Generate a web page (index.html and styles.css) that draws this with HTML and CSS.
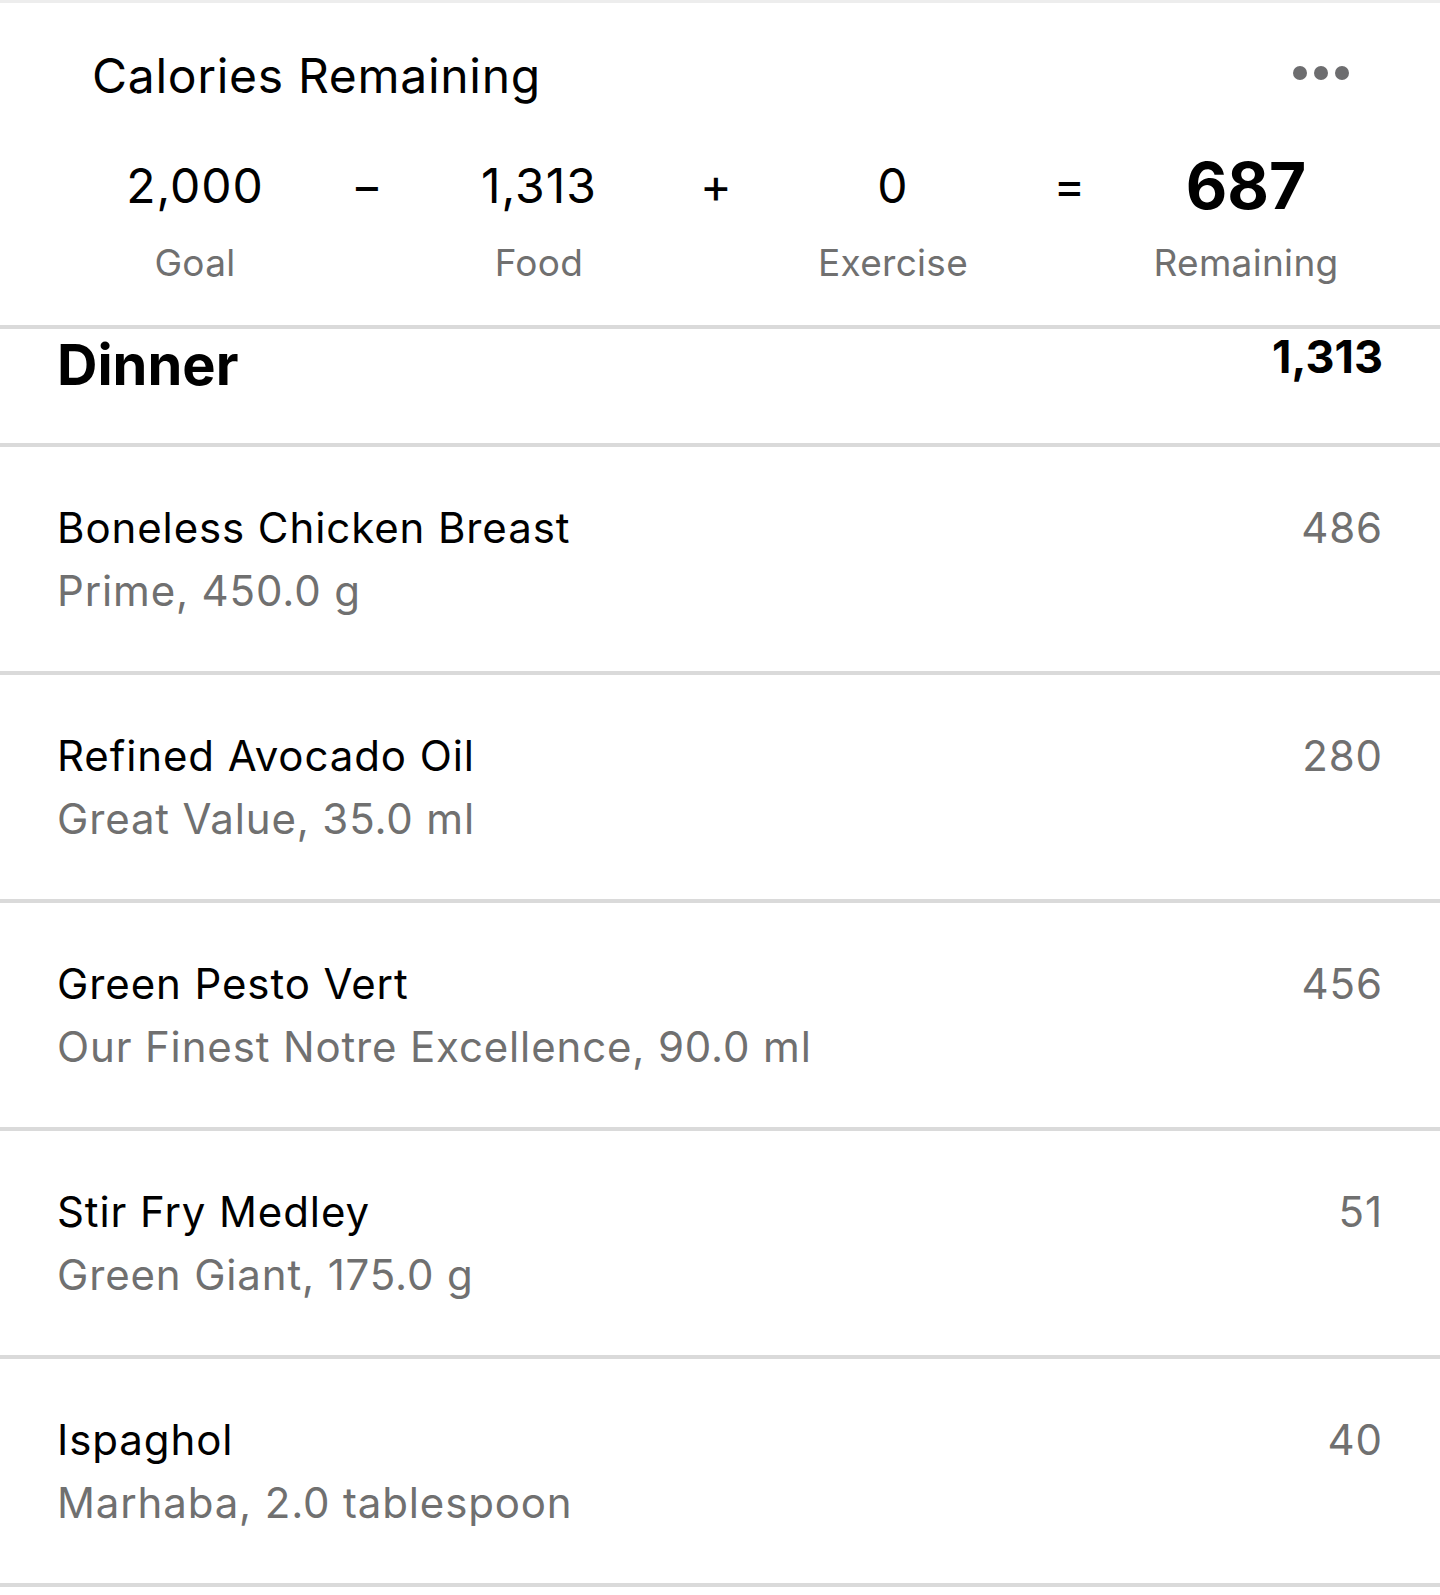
FILE: index.html
```html
<!DOCTYPE html>
<html lang="en">

<head>
    <meta charset="UTF-8">
    <meta name="viewport" content="width=device-width, initial-scale=1.0">
    <title>Diary - Dinner</title>
    <link rel="stylesheet" href="styles.css">
</head>

<body>
    <div class="summary">
        <div class="summary-head">
            <h1 class="summary-title">Calories Remaining</h1>
            <div class="more-dots">
                <span></span><span></span><span></span>
            </div>
        </div>
        <div class="equation">
            <div class="eq-col">
                <div class="eq-value">2,000</div>
                <div class="eq-label">Goal</div>
            </div>
            <div class="eq-op">&minus;</div>
            <div class="eq-col">
                <div class="eq-value">1,313</div>
                <div class="eq-label">Food</div>
            </div>
            <div class="eq-op">+</div>
            <div class="eq-col">
                <div class="eq-value">0</div>
                <div class="eq-label">Exercise</div>
            </div>
            <div class="eq-op">=</div>
            <div class="eq-col">
                <div class="eq-value eq-result">687</div>
                <div class="eq-label">Remaining</div>
            </div>
        </div>
    </div>

    <div class="meal">
        <div class="meal-head">
            <h2 class="meal-name">Dinner</h2>
            <div class="meal-total">1,313</div>
        </div>

        <div class="food-row">
            <div class="food-info">
                <div class="food-name">Boneless Chicken Breast</div>
                <div class="food-desc">Prime, 450.0 g</div>
            </div>
            <div class="food-cal">486</div>
        </div>

        <div class="food-row">
            <div class="food-info">
                <div class="food-name">Refined Avocado Oil</div>
                <div class="food-desc">Great Value, 35.0 ml</div>
            </div>
            <div class="food-cal">280</div>
        </div>

        <div class="food-row">
            <div class="food-info">
                <div class="food-name">Green Pesto Vert</div>
                <div class="food-desc">Our Finest Notre Excellence, 90.0 ml</div>
            </div>
            <div class="food-cal">456</div>
        </div>

        <div class="food-row">
            <div class="food-info">
                <div class="food-name">Stir Fry Medley</div>
                <div class="food-desc">Green Giant, 175.0 g</div>
            </div>
            <div class="food-cal">51</div>
        </div>

        <div class="food-row food-row-last">
            <div class="food-info">
                <div class="food-name">Ispaghol</div>
                <div class="food-desc">Marhaba, 2.0 tablespoon</div>
            </div>
            <div class="food-cal">40</div>
        </div>
    </div>
</body>

</html>
```

FILE: styles.css
```css
/* Page basics */
body {
    margin: 0;
    background-color: #fff;
    color: #000;
    font-family: "Inter", "Noto Sans", sans-serif;
}

/* Calories remaining card */
.summary {
    border-top: 3px solid #ededed;
    padding-bottom: 40px;
}

.summary-head {
    display: flex;
    justify-content: space-between;
    align-items: center;
    padding: 44px 91px 0 92px;
}

.summary-title {
    margin: 0;
    font-size: 48px;
    line-height: 58px;
    font-weight: 400;
    letter-spacing: 0.7px;
}

/* The "..." menu button */
.more-dots {
    display: flex;
    gap: 7px;
    margin-top: -6px;
}

.more-dots span {
    width: 14px;
    height: 14px;
    border-radius: 50%;
    background-color: #6d6d6f;
}

/* Goal - Food + Exercise = Remaining */
.equation {
    display: grid;
    grid-template-columns: 304px 40px 304px 50px 304px 49px 304px;
    padding: 52px 0 0 43px;
}

.eq-col {
    display: flex;
    flex-direction: column;
    align-items: center;
}

.eq-value {
    font-size: 48px;
    line-height: 58px;
    letter-spacing: 1px;
}

.eq-result {
    font-size: 64px;
    font-weight: 700;
    letter-spacing: 0;
}

.eq-op {
    text-align: center;
    font-size: 48px;
    line-height: 58px;
}

.eq-label {
    margin-top: 25px;
    font-size: 37px;
    line-height: 45px;
    letter-spacing: 0.3px;
    color: #707070;
}

/* Meal section */
.meal-head {
    display: flex;
    justify-content: space-between;
    align-items: flex-start;
    height: 114px;
    padding: 0 57px 0 57px;
    border-top: 4px solid #dadada;
}

.meal-name {
    margin: 2px 0 0;
    font-size: 56px;
    line-height: 69px;
    font-weight: 700;
}

.meal-total {
    font-size: 45px;
    line-height: 56px;
    font-weight: 700;
}

/* Food entries */
.food-row {
    display: flex;
    justify-content: space-between;
    align-items: flex-start;
    height: 168px;
    padding: 56px 57px 0 57px;
    border-top: 4px solid #dadada;
}

.food-row-last {
    border-bottom: 4px solid #dadada;
}

.food-name {
    font-size: 42px;
    line-height: 50px;
    letter-spacing: 0.9px;
}

.food-desc {
    margin-top: 13px;
    font-size: 42px;
    line-height: 50px;
    letter-spacing: 0.85px;
    color: #707070;
}

.food-cal {
    font-size: 42px;
    line-height: 50px;
    letter-spacing: 0.9px;
    color: #707070;
}
```
